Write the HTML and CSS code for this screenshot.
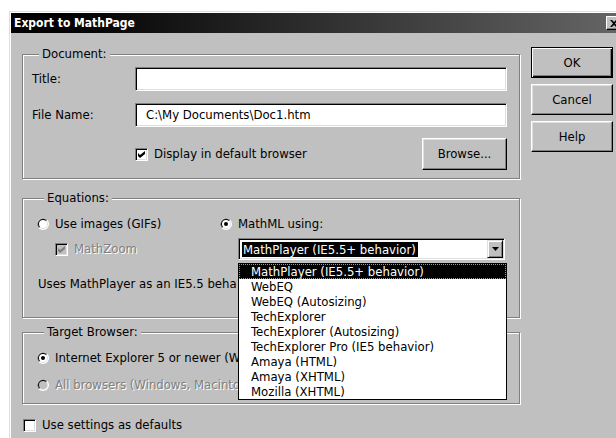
FILE: index.html
```html
<!DOCTYPE html>
<html>
<head>
<meta charset="utf-8">
<title>Export to MathPage</title>
<link rel="stylesheet" href="styles.css">
</head>
<body>
<div class="window">
  <div class="titlebar">
    <span class="title">Export to MathPage</span>
    <span class="close-btn">
      <svg width="8" height="7" viewBox="0 0 8 7"><path d="M0 0h2l2 2 2-2h2L5 3.5 8 7H6L4 5 2 7H0l3-3.5z" fill="#000"/></svg>
    </span>
  </div>

  <div class="dialog">
    <div class="main">
      <fieldset class="group group-doc">
        <legend>Document:</legend>
        <div class="field-row">
          <span class="field-label">Title:</span>
          <div class="textbox"></div>
        </div>
        <div class="field-row">
          <span class="field-label">File Name:</span>
          <div class="textbox">C:\My Documents\Doc1.htm</div>
        </div>
        <div class="browse-row">
          <span class="checkbox checked">
            <svg width="7" height="7" viewBox="0 0 7 7"><path d="M0 2l2 2 5-4v3L2 7 0 5z" fill="#000"/></svg>
          </span>
          <span class="option-text">Display in default browser</span>
          <span class="button browse-btn">Browse...</span>
        </div>
      </fieldset>

      <fieldset class="group group-eq">
        <legend>Equations:</legend>
        <div class="eq-grid">
          <div class="option">
            <svg class="radio" width="12" height="12" viewBox="0 0 12 12">
              <circle cx="6" cy="6" r="6" fill="#fff"/>
              <path d="M10.24 1.76A6 6 0 0 0 1.76 10.24z" fill="#808080"/>
              <circle cx="6" cy="6" r="5" fill="#dfdfdf"/>
              <path d="M9.54 2.46A5 5 0 0 0 2.46 9.54z" fill="#000"/>
              <circle cx="6" cy="6" r="4" fill="#fff"/>
            </svg>
            <span class="option-text">Use images (GIFs)</span>
          </div>
          <div class="option">
            <svg class="radio" width="12" height="12" viewBox="0 0 12 12">
              <circle cx="6" cy="6" r="6" fill="#fff"/>
              <path d="M10.24 1.76A6 6 0 0 0 1.76 10.24z" fill="#808080"/>
              <circle cx="6" cy="6" r="5" fill="#dfdfdf"/>
              <path d="M9.54 2.46A5 5 0 0 0 2.46 9.54z" fill="#000"/>
              <circle cx="6" cy="6" r="4" fill="#fff"/>
              <circle cx="6" cy="6" r="2" fill="#000"/>
            </svg>
            <span class="option-text">MathML using:</span>
          </div>

          <div class="option option-sub">
            <span class="checkbox checked disabled">
              <svg width="7" height="7" viewBox="0 0 7 7"><path d="M0 2l2 2 5-4v3L2 7 0 5z" fill="#808080"/></svg>
            </span>
            <span class="option-text disabled-text">MathZoom</span>
          </div>
          <div class="combo">
            <div class="combo-field">
              <span class="combo-value">MathPlayer (IE5.5+ behavior)</span>
              <span class="combo-arrow">
                <svg width="7" height="4" viewBox="0 0 7 4"><path d="M0 0h7L3.5 4z" fill="#000"/></svg>
              </span>
            </div>
            <ul class="combo-list">
              <li class="active">MathPlayer (IE5.5+ behavior)</li>
              <li>WebEQ</li>
              <li>WebEQ (Autosizing)</li>
              <li>TechExplorer</li>
              <li>TechExplorer (Autosizing)</li>
              <li>TechExplorer Pro (IE5 behavior)</li>
              <li>Amaya (HTML)</li>
              <li>Amaya (XHTML)</li>
              <li>Mozilla (XHTML)</li>
            </ul>
          </div>
        </div>
        <p class="eq-note">Uses MathPlayer as an IE5.5 behavior to render MathML.</p>
      </fieldset>

      <fieldset class="group group-target">
        <legend>Target Browser:</legend>
        <div class="option">
          <svg class="radio" width="12" height="12" viewBox="0 0 12 12">
            <circle cx="6" cy="6" r="6" fill="#fff"/>
            <path d="M10.24 1.76A6 6 0 0 0 1.76 10.24z" fill="#808080"/>
            <circle cx="6" cy="6" r="5" fill="#dfdfdf"/>
            <path d="M9.54 2.46A5 5 0 0 0 2.46 9.54z" fill="#000"/>
            <circle cx="6" cy="6" r="4" fill="#fff"/>
            <circle cx="6" cy="6" r="2" fill="#000"/>
          </svg>
          <span class="option-text clipped">Internet Explorer 5 or newer (Windows only)</span>
        </div>
        <div class="option">
          <svg class="radio" width="12" height="12" viewBox="0 0 12 12">
            <circle cx="6" cy="6" r="6" fill="#fff"/>
            <path d="M10.24 1.76A6 6 0 0 0 1.76 10.24z" fill="#808080"/>
            <circle cx="6" cy="6" r="5" fill="#dfdfdf"/>
            <path d="M9.54 2.46A5 5 0 0 0 2.46 9.54z" fill="#000"/>
            <circle cx="6" cy="6" r="4" fill="#c0c0c0"/>
          </svg>
          <span class="option-text clipped disabled-text">All browsers (Windows, Macintosh, Unix)</span>
        </div>
      </fieldset>

      <div class="option defaults-row">
        <span class="checkbox"></span>
        <span class="option-text">Use settings as defaults</span>
      </div>
    </div>

    <div class="actions">
      <span class="button default-btn">OK</span>
      <span class="button">Cancel</span>
      <span class="button">Help</span>
    </div>
  </div>
</div>
</body>
</html>
```

FILE: styles.css
```css
* {
  box-sizing: border-box;
}

html,
body {
  margin: 0;
}

body {
  width: 616px;
  height: 438px;
  overflow: hidden;
  background: #fff;
  color: #000;
  font: 13px/14px "DejaVu Sans Condensed", "Liberation Sans", sans-serif;
}

/* window frame */
.window {
  margin: 11px 0 0 9px;
  width: 616px;
  height: 440px;
  padding: 1px;
  background: #c0c0c0;
  border-top: 1px solid #dfdfdf;
  border-left: 1px solid #dfdfdf;
  box-shadow: inset 1px 1px 0 #fff;
}

.titlebar {
  display: flex;
  align-items: center;
  justify-content: space-between;
  height: 20px;
  padding: 0 2px 0 3px;
  background: linear-gradient(to right, #000 0%, #000 8%, #666 100%);
  color: #fff;
}

.title {
  font-weight: bold;
  font-size: 12px;
}

.close-btn {
  display: flex;
  align-items: center;
  justify-content: center;
  width: 16px;
  height: 14px;
  background: #c0c0c0;
  border: 1px solid;
  border-color: #fff #000 #000 #fff;
  box-shadow: inset -1px -1px 0 #808080;
}

/* dialog body */
.dialog {
  display: flex;
  gap: 11px;
  padding: 14px 0 0 11px;
}

.main {
  width: 498px;
  display: flex;
  flex-direction: column;
}

/* etched group boxes */
.group {
  margin: 0;
  padding: 0;
  min-width: 0;
  border: 1px solid #808080;
  box-shadow: 1px 1px 0 #fff, inset 1px 1px 0 #fff;
}

.group legend {
  margin-left: 7px;
  padding: 0 3px;
  line-height: 14px;
  background: #c0c0c0;
}

.group-doc {
  padding: 6px 12px 8px 9px;
}

.group-eq {
  margin-top: 12px;
  padding: 12px 12px 26px 14px;
}

.group-target {
  margin-top: 7px;
  padding: 12px 12px 11px 14px;
}

.field-row {
  display: flex;
  align-items: center;
  margin-bottom: 12px;
}

.field-label {
  width: 103px;
}

.textbox {
  flex: 1;
  height: 24px;
  padding: 0 10px;
  display: flex;
  align-items: center;
  background: #fff;
  border: 1px solid;
  border-color: #808080 #fff #fff #808080;
  box-shadow: inset 1px 1px 0 #000, inset -1px -1px 0 #dfdfdf;
}

.browse-row {
  display: flex;
  align-items: center;
  margin-top: -1px;
  padding-left: 103px;
}

/* check boxes and radios */
.option {
  display: flex;
  align-items: center;
  height: 14px;
}

.option-text {
  margin-left: 6px;
  white-space: nowrap;
}

/* labels that run under the open drop-down list end where it begins */
.clipped {
  max-width: 183px;
  overflow: hidden;
}

.checkbox {
  flex: none;
  width: 13px;
  height: 13px;
  display: flex;
  align-items: center;
  justify-content: center;
  background: #fff;
  border: 1px solid;
  border-color: #808080 #fff #fff #808080;
  box-shadow: inset 1px 1px 0 #000, inset -1px -1px 0 #dfdfdf;
}

.checkbox.disabled {
  background: #c0c0c0;
}

.radio {
  flex: none;
}

.disabled-text {
  color: #808080;
  text-shadow: 1px 1px 0 #fff;
}

/* push buttons */
.button {
  display: flex;
  align-items: center;
  justify-content: center;
  height: 31px;
  background: #c0c0c0;
  border: 1px solid;
  border-color: #fff #000 #000 #fff;
  box-shadow: inset -1px -1px 0 #808080, inset 1px 1px 0 #dfdfdf;
}

.default-btn {
  border-color: #000;
  box-shadow: inset 1px 1px 0 #fff, inset -1px -1px 0 #000, inset -2px -2px 0 #808080;
}

.browse-btn {
  margin-left: auto;
  width: 85px;
  height: 32px;
}

.actions {
  width: 82px;
  display: flex;
  flex-direction: column;
  gap: 6px;
}

/* equations block */
.eq-grid {
  display: grid;
  grid-template-columns: 183px 1fr;
  row-gap: 7px;
  align-items: center;
}

.option-sub {
  padding-left: 18px;
}

.combo {
  position: relative;
  margin-left: 18px;
  width: 267px;
}

.combo-field {
  display: flex;
  align-items: center;
  justify-content: space-between;
  height: 22px;
  padding: 1px;
  background: #fff;
  border: 1px solid;
  border-color: #808080 #fff #fff #808080;
  box-shadow: inset 1px 1px 0 #000, inset -1px -1px 0 #dfdfdf;
}

.combo-value {
  margin-left: 2px;
  padding: 0 2px 0 1px;
  line-height: 15px;
  background: #000;
  color: #fff;
}

.combo-arrow {
  display: flex;
  align-items: center;
  justify-content: center;
  width: 16px;
  height: 18px;
  background: #c0c0c0;
  border: 1px solid;
  border-color: #dfdfdf #000 #000 #dfdfdf;
  box-shadow: inset 1px 1px 0 #fff, inset -1px -1px 0 #808080;
}

.combo-list {
  position: absolute;
  top: 25px;
  left: 0;
  width: 269px;
  margin: 0;
  padding: 0;
  list-style: none;
  background: #fff;
  border: 1px solid #000;
  z-index: 2;
}

.combo-list li {
  height: 15px;
  line-height: 15px;
  padding-left: 12px;
  white-space: nowrap;
}

.combo-list li.active {
  background: #000;
  color: #fff;
  outline: 1px dotted #9a9a9a;
  outline-offset: -1px;
}

.eq-note {
  width: 199px;
  overflow: hidden;
  margin: 17px 0 0 1px;
  white-space: nowrap;
}

.group-target .option + .option {
  margin-top: 13px;
}

.defaults-row {
  margin: 14px 0 0 1px;
}
```
